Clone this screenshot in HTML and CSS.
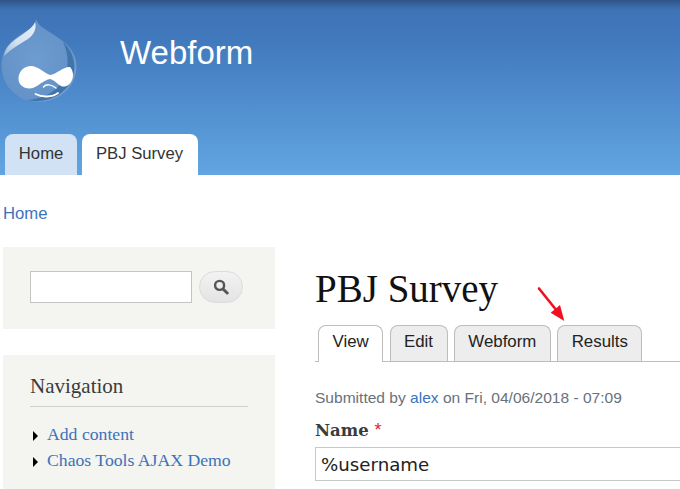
FILE: index.html
```html
<!DOCTYPE html>
<html lang="en">
<head>
<meta charset="utf-8">
<title>PBJ Survey | Webform</title>
<link rel="stylesheet" href="styles.css">
</head>
<body>
<header class="site-header">
  <div class="branding">
    <svg class="logo" width="78" height="85" viewBox="0 0 78 85" aria-hidden="true">
      <defs>
        <radialGradient id="dropFill" cx="0.45" cy="0.5" r="0.62">
          <stop offset="0" stop-color="#6d9cd0"/>
          <stop offset="0.75" stop-color="#6593c8"/>
          <stop offset="1" stop-color="#7ea3cb"/>
        </radialGradient>
        <linearGradient id="shine" x1="1" y1="0" x2="0" y2="1">
          <stop offset="0" stop-color="#e6eef7"/>
          <stop offset="0.6" stop-color="#d3e1f0"/>
          <stop offset="1" stop-color="#9dbbdc"/>
        </linearGradient>
      </defs>
      <path d="M36 1 C36 7 30 11 20 17 C9 24 1.5 33 1.5 47 C1.5 68 18 84 39 84 C60 84 76.5 68 76.5 48 C76.5 31 62 22 51 15 C43 10 38 7 36 1 Z" fill="url(#dropFill)"/>
      <path d="M63 24 C76 36 78 54 68 68 C58 81 42 85 27 82 C44 81 58 73 64 60 C69 49 69 36 63 24 Z" fill="#3f75ab"/>
      <path d="M35 4 C33 10 24 15 16 21 C9 26 5 31 4 38 C11 31 20 26 28 21 C34 17 37 10 35 4 Z" fill="url(#shine)"/>
      <path d="M18.5 60 C19 53 24 48 31 48 C38 48 44 55 50 57 C57 56 64 48 70 49 C73 52 74 58 72 62 C70 67 66 69 62 68.5 C58 67 56 63 50 61 C44 62 40 67 33 70 C25 72 18 67 18.5 60 Z" fill="#ffffff"/>
      <path d="M43.5 69 C46 66 51 66 56 70" fill="none" stroke="#ffffff" stroke-width="1.5" stroke-linecap="round"/>
      <path d="M35.5 76 C42 79.5 52 79.5 58 75" fill="none" stroke="#ffffff" stroke-width="1.8" stroke-linecap="round"/>
    </svg>
    <div class="site-name">Webform</div>
  </div>
  <nav class="main-menu">
    <a class="main-tab" href="#">Home</a>
    <a class="main-tab main-tab-active" href="#">PBJ Survey</a>
  </nav>
</header>
<div class="breadcrumb"><a href="#">Home</a></div>
<div class="columns">
  <aside class="sidebar">
    <section class="block block-search">
      <input class="search-input" type="text" aria-label="Search">
      <button class="search-button" type="button" aria-label="Search">
        <svg width="16" height="16" viewBox="0 0 16 16" aria-hidden="true">
          <circle cx="6.6" cy="6.4" r="4.5" fill="none" stroke="#555" stroke-width="2.4"/>
          <path d="M10 10 L14.2 14" stroke="#555" stroke-width="3" stroke-linecap="round"/>
        </svg>
      </button>
    </section>
    <section class="block block-nav">
      <h2 class="block-title">Navigation</h2>
      <ul class="nav-list">
        <li><a href="#">Add content</a></li>
        <li><a href="#">Chaos Tools AJAX Demo</a></li>
      </ul>
    </section>
  </aside>
  <main class="content">
    <h1 class="page-title">PBJ Survey</h1>
    <svg class="arrow" width="30" height="37" viewBox="0 0 30 37" aria-hidden="true">
      <path d="M2 2.5 L20 25" stroke="#f01020" stroke-width="2.6" stroke-linecap="round"/>
      <path d="M27.3 35 L13.7 26.7 L23 19 Z" fill="#f01020"/>
    </svg>
    <ul class="tabs">
      <li class="tab tab-active"><a href="#">View</a></li>
      <li class="tab"><a href="#">Edit</a></li>
      <li class="tab"><a href="#">Webform</a></li>
      <li class="tab"><a href="#">Results</a></li>
    </ul>
    <p class="submitted">Submitted by <a href="#">alex</a> on Fri, 04/06/2018 - 07:09</p>
    <label class="field-label" for="name">Name <span class="required">*</span></label>
    <input class="field-input" id="name" type="text" value="%username">
  </main>
</div>
</body>
</html>
```
FILE: styles.css
```css
html, body {
  margin: 0;
  padding: 0;
  height: 489px;
  overflow: hidden;
  background: #fff;
  font-family: "Liberation Sans", Arial, sans-serif;
  color: #3b3b3b;
}
a { color: #3b73bb; text-decoration: none; }

.site-header {
  height: 175px;
  background: linear-gradient(to bottom, #2e5488 0, #3f74b6 10px, #4179bd 40px, #62a5e2 175px);
  display: flex;
  flex-direction: column;
  justify-content: space-between;
  box-sizing: border-box;
  padding-top: 18px;
}
.branding { display: flex; align-items: flex-start; }
.logo { display: block; filter: blur(0.4px); }
.site-name {
  margin: 15px 0 0 42px;
  font-size: 33px;
  line-height: 40px;
  color: #fff;
}
.main-menu { display: flex; gap: 5px; padding-left: 5px; }
.main-tab {
  height: 41px;
  line-height: 39px;
  padding: 0 13.8px;
  font-size: 16.7px;
  color: #333;
  background: #d0e2f4;
  border-radius: 8px 8px 0 0;
}
.main-tab-active { background: #fff; padding-right: 14.6px; }

.breadcrumb {
  margin: 0;
  padding: 29px 0 0 3px;
  height: 43px;
  box-sizing: border-box;
  font-size: 16.7px;
  line-height: 19px;
}

.columns { display: flex; margin: 29px 0 0 3px; }
.sidebar { width: 272px; flex: none; }
.block { background: #f4f4f0; }
.block-search {
  height: 82px;
  box-sizing: border-box;
  padding: 24px 0 0 27px;
  display: flex;
  gap: 7px;
  margin-bottom: 26px;
}
.search-input {
  width: 162px;
  height: 32px;
  box-sizing: border-box;
  border: 1px solid #c4c4c4;
  background: #fff;
  margin: 0;
  padding: 0;
}
.search-button {
  width: 44px;
  height: 32px;
  margin: 0;
  padding: 0;
  border: 1px solid #dcdcdc;
  border-radius: 16px;
  background: linear-gradient(to bottom, #f3f3f3, #e4e4e4);
  display: flex;
  align-items: center;
  justify-content: center;
}
.block-nav { padding: 18px 27px 30px; }
.block-title {
  margin: 0;
  padding-bottom: 7px;
  border-bottom: 1px solid #cfcfcb;
  font-family: "Liberation Serif", serif;
  font-weight: 400;
  font-size: 21px;
  line-height: 26px;
  color: #3b3b3b;
}
.nav-list {
  list-style: none;
  margin: 14px 0 0;
  padding: 0;
  font-family: "Liberation Serif", serif;
  font-size: 17.7px;
  line-height: 26px;
}
.nav-list li { display: flex; align-items: center; }
.nav-list li::before {
  content: "";
  width: 0;
  height: 0;
  border-style: solid;
  border-width: 5px 0 5px 5px;
  border-color: transparent transparent transparent #000;
  margin: 3px 9px 0 3px;
}

.content { flex: 1; margin-left: 40px; position: relative; min-width: 0; overflow: hidden; }
.page-title {
  margin: 0;
  padding-top: 21px;
  height: 78px;
  box-sizing: border-box;
  font-family: "Liberation Serif", serif;
  font-weight: 400;
  font-size: 39px;
  line-height: 42px;
  color: #111;
}
.arrow { position: absolute; left: 222px; top: 39px; }
.tabs {
  list-style: none;
  margin: 0;
  padding: 0 0 0 3px;
  display: flex;
  gap: 6.3px;
  border-bottom: 1px solid #bdbdbd;
  height: 36px;
}
.tab {
  height: 36px;
  box-sizing: border-box;
  border: 1px solid #bdbdbd;
  border-bottom: 0;
  border-radius: 8px 8px 0 0;
  background: #ededed;
  padding: 0 13.5px;
  font-size: 16.85px;
  line-height: 32px;
}
.tab a { color: #222; }
.tab-active {
  background: #fff;
  height: 37px;
}
.submitted {
  margin: 27px 0 0;
  font-size: 15.55px;
  line-height: 18px;
  color: #68717a;
}
.field-label {
  display: block;
  margin-top: 13px;
  font-family: "DejaVu Serif", serif;
  font-weight: 700;
  font-size: 16.5px;
  line-height: 20px;
  color: #3b3b3b;
}
.required {
  color: #e31b2b;
  font-family: "Liberation Sans", sans-serif;
  font-weight: 400;
  font-size: 18px;
}
.field-input {
  display: block;
  margin-top: 6px;
  width: 400px;
  height: 34px;
  box-sizing: border-box;
  border: 1px solid #c8c8c8;
  padding: 0 5px;
  font-family: "DejaVu Sans", Verdana, sans-serif;
  font-size: 18.2px;
  color: #222;
  background: #fff;
}
```
